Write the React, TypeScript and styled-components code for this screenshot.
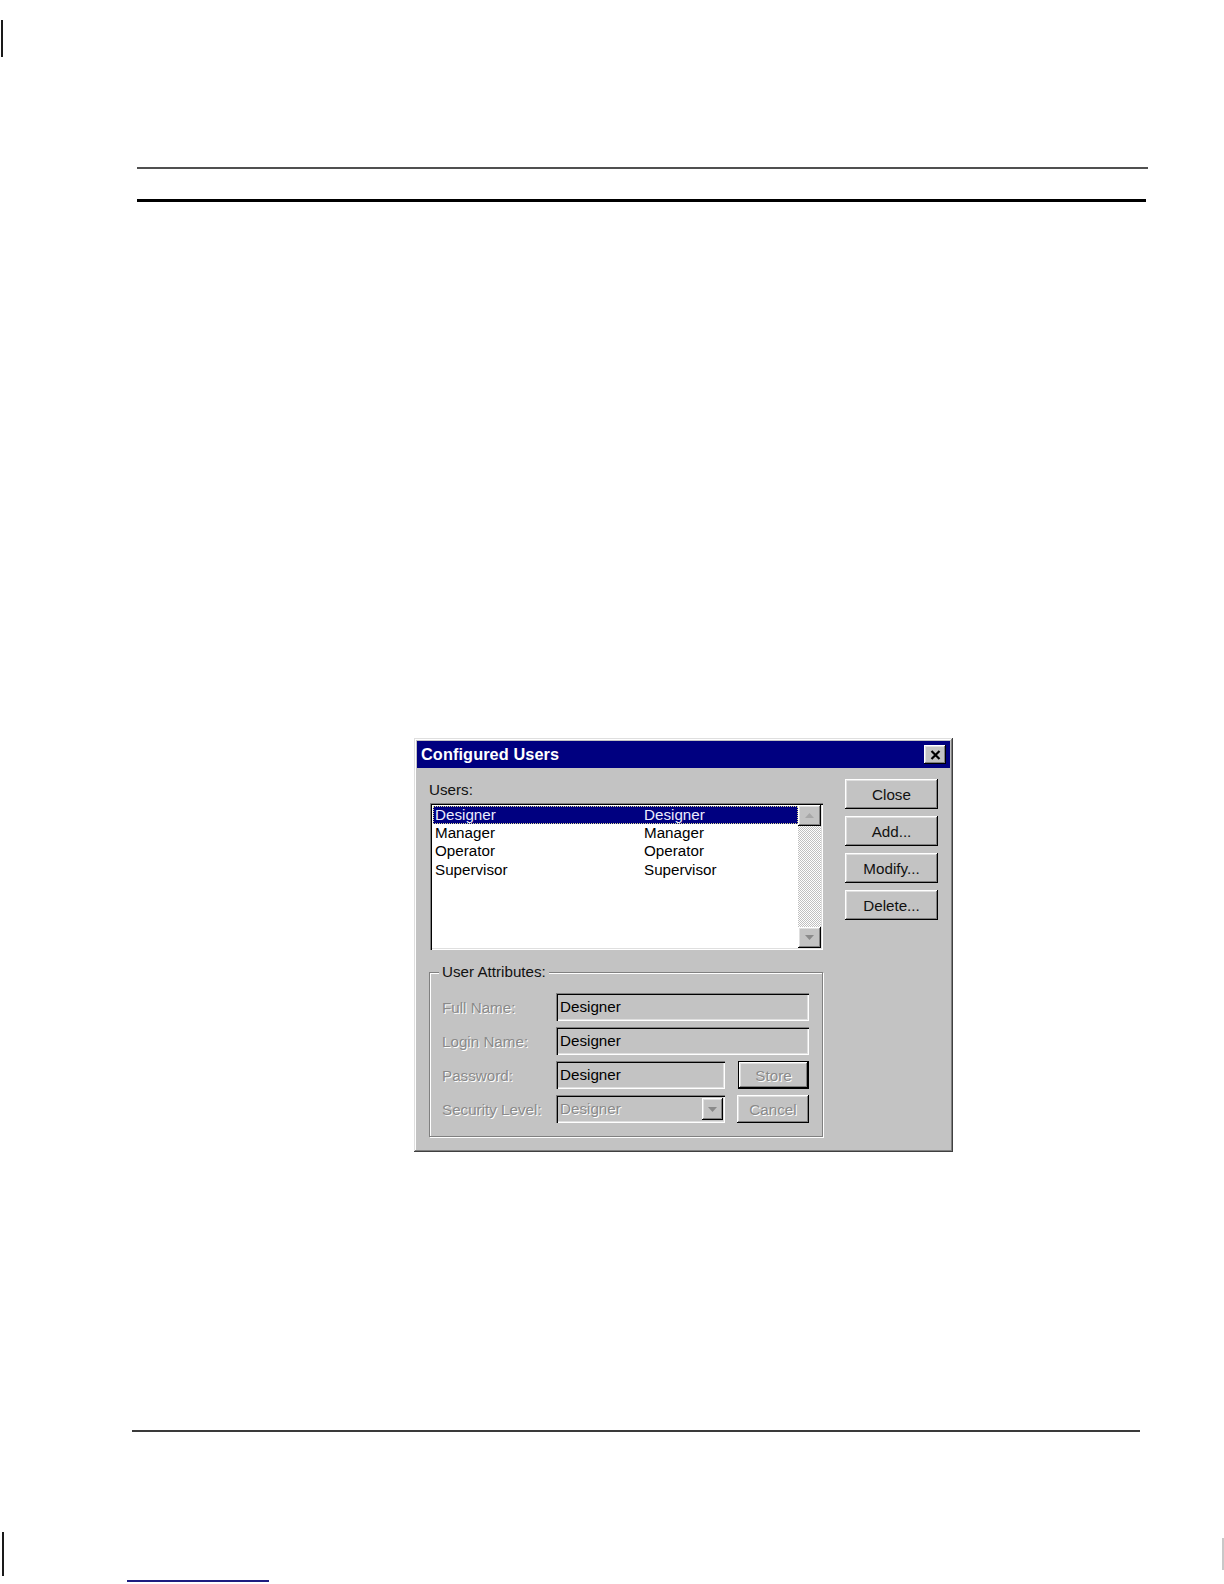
import React from 'react';
import styled, { createGlobalStyle } from 'styled-components';

const Global = createGlobalStyle`
  html, body { margin: 0; padding: 0; background: #fff; overflow: hidden; }
  body { font-family: "Liberation Sans", Arial, sans-serif; }
  * { box-sizing: border-box; }
`;

const Page = styled.div`
  width: 1224px;
  height: 1584px;
  display: flex;
  flex-direction: column;
  align-items: flex-start;
  overflow: hidden;
  background: #fff;
`;

const MarginBar = styled.div<{ $top: number; $left?: number; $right?: number; $h: number; $color?: string }>`
  flex-shrink: 0;
  width: 2px;
  height: ${(p) => p.$h}px;
  margin-top: ${(p) => p.$top}px;
  margin-left: ${(p) => p.$left ?? 0}px;
  margin-right: ${(p) => p.$right ?? 0}px;
  background: ${(p) => p.$color ?? '#1a1a1a'};
`;

const Rule = styled.div<{ $top: number; $left: number; $w: number; $h: number; $color: string }>`
  flex-shrink: 0;
  margin-top: ${(p) => p.$top}px;
  margin-left: ${(p) => p.$left}px;
  width: ${(p) => p.$w}px;
  height: ${(p) => p.$h}px;
  background: ${(p) => p.$color};
`;

const FooterRow = styled.div`
  flex-shrink: 0;
  width: 100%;
  display: flex;
  justify-content: space-between;
  align-items: flex-start;
`;

/* ---------- dialog ---------- */

const Window = styled.div`
  flex-shrink: 0;
  margin-top: 536px;
  margin-left: 414px;
  width: 539px;
  height: 414px;
  padding: 3px;
  background: #c3c3c3;
  box-shadow: inset -1px -1px #404040, inset 1px 1px #dfdfdf, inset -2px -2px #808080, inset 2px 2px #fff;
  display: flex;
  flex-direction: column;
  font-family: "Liberation Sans", Arial, sans-serif;
  font-size: 15.2px;
  color: #000;
`;

const TitleBar = styled.div`
  height: 27px;
  background: #000080;
  display: flex;
  align-items: center;
  justify-content: space-between;
  padding: 0 4px;
`;

const TitleText = styled.span`
  color: #fff;
  font-weight: bold;
  font-size: 16.3px;
  letter-spacing: 0.1px;
`;

const Bevel = `
  background: #c3c3c3;
  border: none;
  box-shadow: inset -1px -1px #000, inset 1px 1px #fff, inset -2px -2px #808080, inset 2px 2px #dfdfdf;
`;

const TitleClose = styled.div`
  ${Bevel}
  width: 22px;
  height: 19px;
  display: flex;
  align-items: center;
  justify-content: center;
`;

const Body = styled.div`
  flex: 1;
  display: grid;
  grid-template-columns: 394px 93px;
  column-gap: 22px;
  padding: 11px 12px 12px 12px;
`;

const LeftCol = styled.div`
  display: flex;
  flex-direction: column;
`;

const Label = styled.div`
  line-height: 18px;
  margin-top: 2px;
  margin-bottom: 4px;
  color: #111;
`;

const ListBox = styled.div`
  height: 147px;
  width: 393px;
  margin-left: 1px;
  padding: 2px;
  background: #fff;
  box-shadow: inset 1px 1px #808080, inset 2px 2px #000, inset -1px -1px #fff, inset -2px -2px #dfdfdf;
  display: flex;
`;

const Rows = styled.div`
  flex: 1;
  padding: 1px 0 0 1px;
  display: flex;
  flex-direction: column;
`;

const Row = styled.div<{ $selected?: boolean }>`
  height: 18.2px;
  line-height: 17px;
  display: grid;
  grid-template-columns: 209px 1fr;
  padding-left: 2px;
  background: ${(p) => (p.$selected ? '#000080' : 'transparent')};
  color: ${(p) => (p.$selected ? '#ececff' : '#000')};
  outline: ${(p) => (p.$selected ? '1px dotted #d8d890' : 'none')};
  outline-offset: -1px;
`;

const ScrollBar = styled.div`
  width: 23px;
  display: flex;
  flex-direction: column;
  background-color: #fff;
  background-image: repeating-conic-gradient(#c0c0c0 0 25%, #fff 0 50%);
  background-size: 2px 2px;
`;

const ScrollButton = styled.div`
  ${Bevel}
  width: 23px;
  height: 21px;
  display: flex;
  align-items: center;
  justify-content: center;
`;

const ScrollTrack = styled.div`
  flex: 1;
`;

const Group = styled.div`
  position: relative;
  margin-top: 22px;
  height: 165px;
  border: 1px solid #808080;
  box-shadow: 1px 1px 0 #fff, inset 1px 1px 0 #fff;
  padding: 20px 13px 13px 12px;
`;

const Legend = styled.span`
  position: absolute;
  top: -10px;
  left: 9px;
  padding: 0 3px;
  line-height: 18px;
  background: #c3c3c3;
  color: #111;
`;

const FormGrid = styled.div`
  display: grid;
  grid-template-columns: 114px 169px 1fr;
  grid-template-rows: repeat(4, 28px);
  row-gap: 6px;
  align-items: center;
`;

const FieldLabel = styled.span`
  color: #8a8a8a;
  text-shadow: 1px 1px 0 #fff;
  white-space: nowrap;
`;

const Field = styled.div<{ $span?: boolean }>`
  grid-column: ${(p) => (p.$span ? '2 / 4' : '2 / 3')};
  height: 100%;
  background: #c3c3c3;
  box-shadow: inset 1px 1px #808080, inset 2px 2px #000, inset -1px -1px #fff, inset -2px -2px #dfdfdf;
  padding-left: 4px;
  line-height: 28px;
  display: flex;
  align-items: center;
  justify-content: space-between;
`;

const ComboText = styled.span`
  color: #8a8a8a;
  text-shadow: 1px 1px 0 #fff;
`;

const ComboButton = styled.div`
  ${Bevel}
  width: 21px;
  height: 22px;
  margin-right: 2px;
  display: flex;
  align-items: center;
  justify-content: center;
`;

const Button = styled.div<{ $default?: boolean; $disabled?: boolean; $w?: number; $h?: number }>`
  ${Bevel}
  width: ${(p) => p.$w ?? 93}px;
  height: ${(p) => p.$h ?? 30}px;
  justify-self: end;
  display: flex;
  align-items: center;
  justify-content: center;
  color: ${(p) => (p.$disabled ? '#8a8a8a' : '#111')};
  text-shadow: ${(p) => (p.$disabled ? '1px 1px 0 #fff' : 'none')};
  border: ${(p) => (p.$default ? '1px solid #000' : 'none')};
`;

const RightCol = styled.div`
  display: flex;
  flex-direction: column;
  gap: 7px;
`;

const Arrow = ({ up, color }: { up?: boolean; color: string }) => (
  <svg width="9" height="5" viewBox="0 0 9 5">
    <path d={up ? 'M0 5 L4.5 0 L9 5 Z' : 'M0 0 L4.5 5 L9 0 Z'} fill={color} />
  </svg>
);

const users = ['Designer', 'Manager', 'Operator', 'Supervisor'];

export default function App() {
  return (
    <>
      <Global />
      <Page>
        <MarginBar $top={20} $left={1} $h={37} />
        <Rule $top={110} $left={137} $w={1011} $h={2} $color="#505050" />
        <Rule $top={30} $left={137} $w={1009} $h={3} $color="#000" />

        <Window>
          <TitleBar>
            <TitleText>Configured Users</TitleText>
            <TitleClose>
              <svg width="11" height="10" viewBox="0 0 11 10">
                <path d="M1.5 1 L9.5 9 M9.5 1 L1.5 9" stroke="#000" strokeWidth="2.2" />
              </svg>
            </TitleClose>
          </TitleBar>
          <Body>
            <LeftCol>
              <Label>Users:</Label>
              <ListBox>
                <Rows>
                  {users.map((u, i) => (
                    <Row key={u} $selected={i === 0}>
                      <span>{u}</span>
                      <span>{u}</span>
                    </Row>
                  ))}
                </Rows>
                <ScrollBar>
                  <ScrollButton>
                    <Arrow up color="#a8a8a8" />
                  </ScrollButton>
                  <ScrollTrack />
                  <ScrollButton>
                    <Arrow color="#8a8a8a" />
                  </ScrollButton>
                </ScrollBar>
              </ListBox>
              <Group>
                <Legend>User Attributes:</Legend>
                <FormGrid>
                  <FieldLabel>Full Name:</FieldLabel>
                  <Field $span>Designer</Field>
                  <FieldLabel>Login Name:</FieldLabel>
                  <Field $span>Designer</Field>
                  <FieldLabel>Password:</FieldLabel>
                  <Field>Designer</Field>
                  <Button $default $disabled $w={71} $h={28}>Store</Button>
                  <FieldLabel>Security Level:</FieldLabel>
                  <Field>
                    <ComboText>Designer</ComboText>
                    <ComboButton>
                      <Arrow color="#8a8a8a" />
                    </ComboButton>
                  </Field>
                  <Button $disabled $w={72} $h={28}>Cancel</Button>
                </FormGrid>
              </Group>
            </LeftCol>
            <RightCol>
              <Button>Close</Button>
              <Button>Add...</Button>
              <Button>Modify...</Button>
              <Button>Delete...</Button>
            </RightCol>
          </Body>
        </Window>

        <Rule $top={278} $left={132} $w={1008} $h={2} $color="#3a3a3a" />
        <FooterRow>
          <MarginBar $top={100} $left={2} $h={44} />
          <MarginBar $top={106} $h={32} $color="#c8c8c8" />
        </FooterRow>
        <Rule $top={4} $left={127} $w={142} $h={2} $color="#1e1e80" />
      </Page>
    </>
  );
}
